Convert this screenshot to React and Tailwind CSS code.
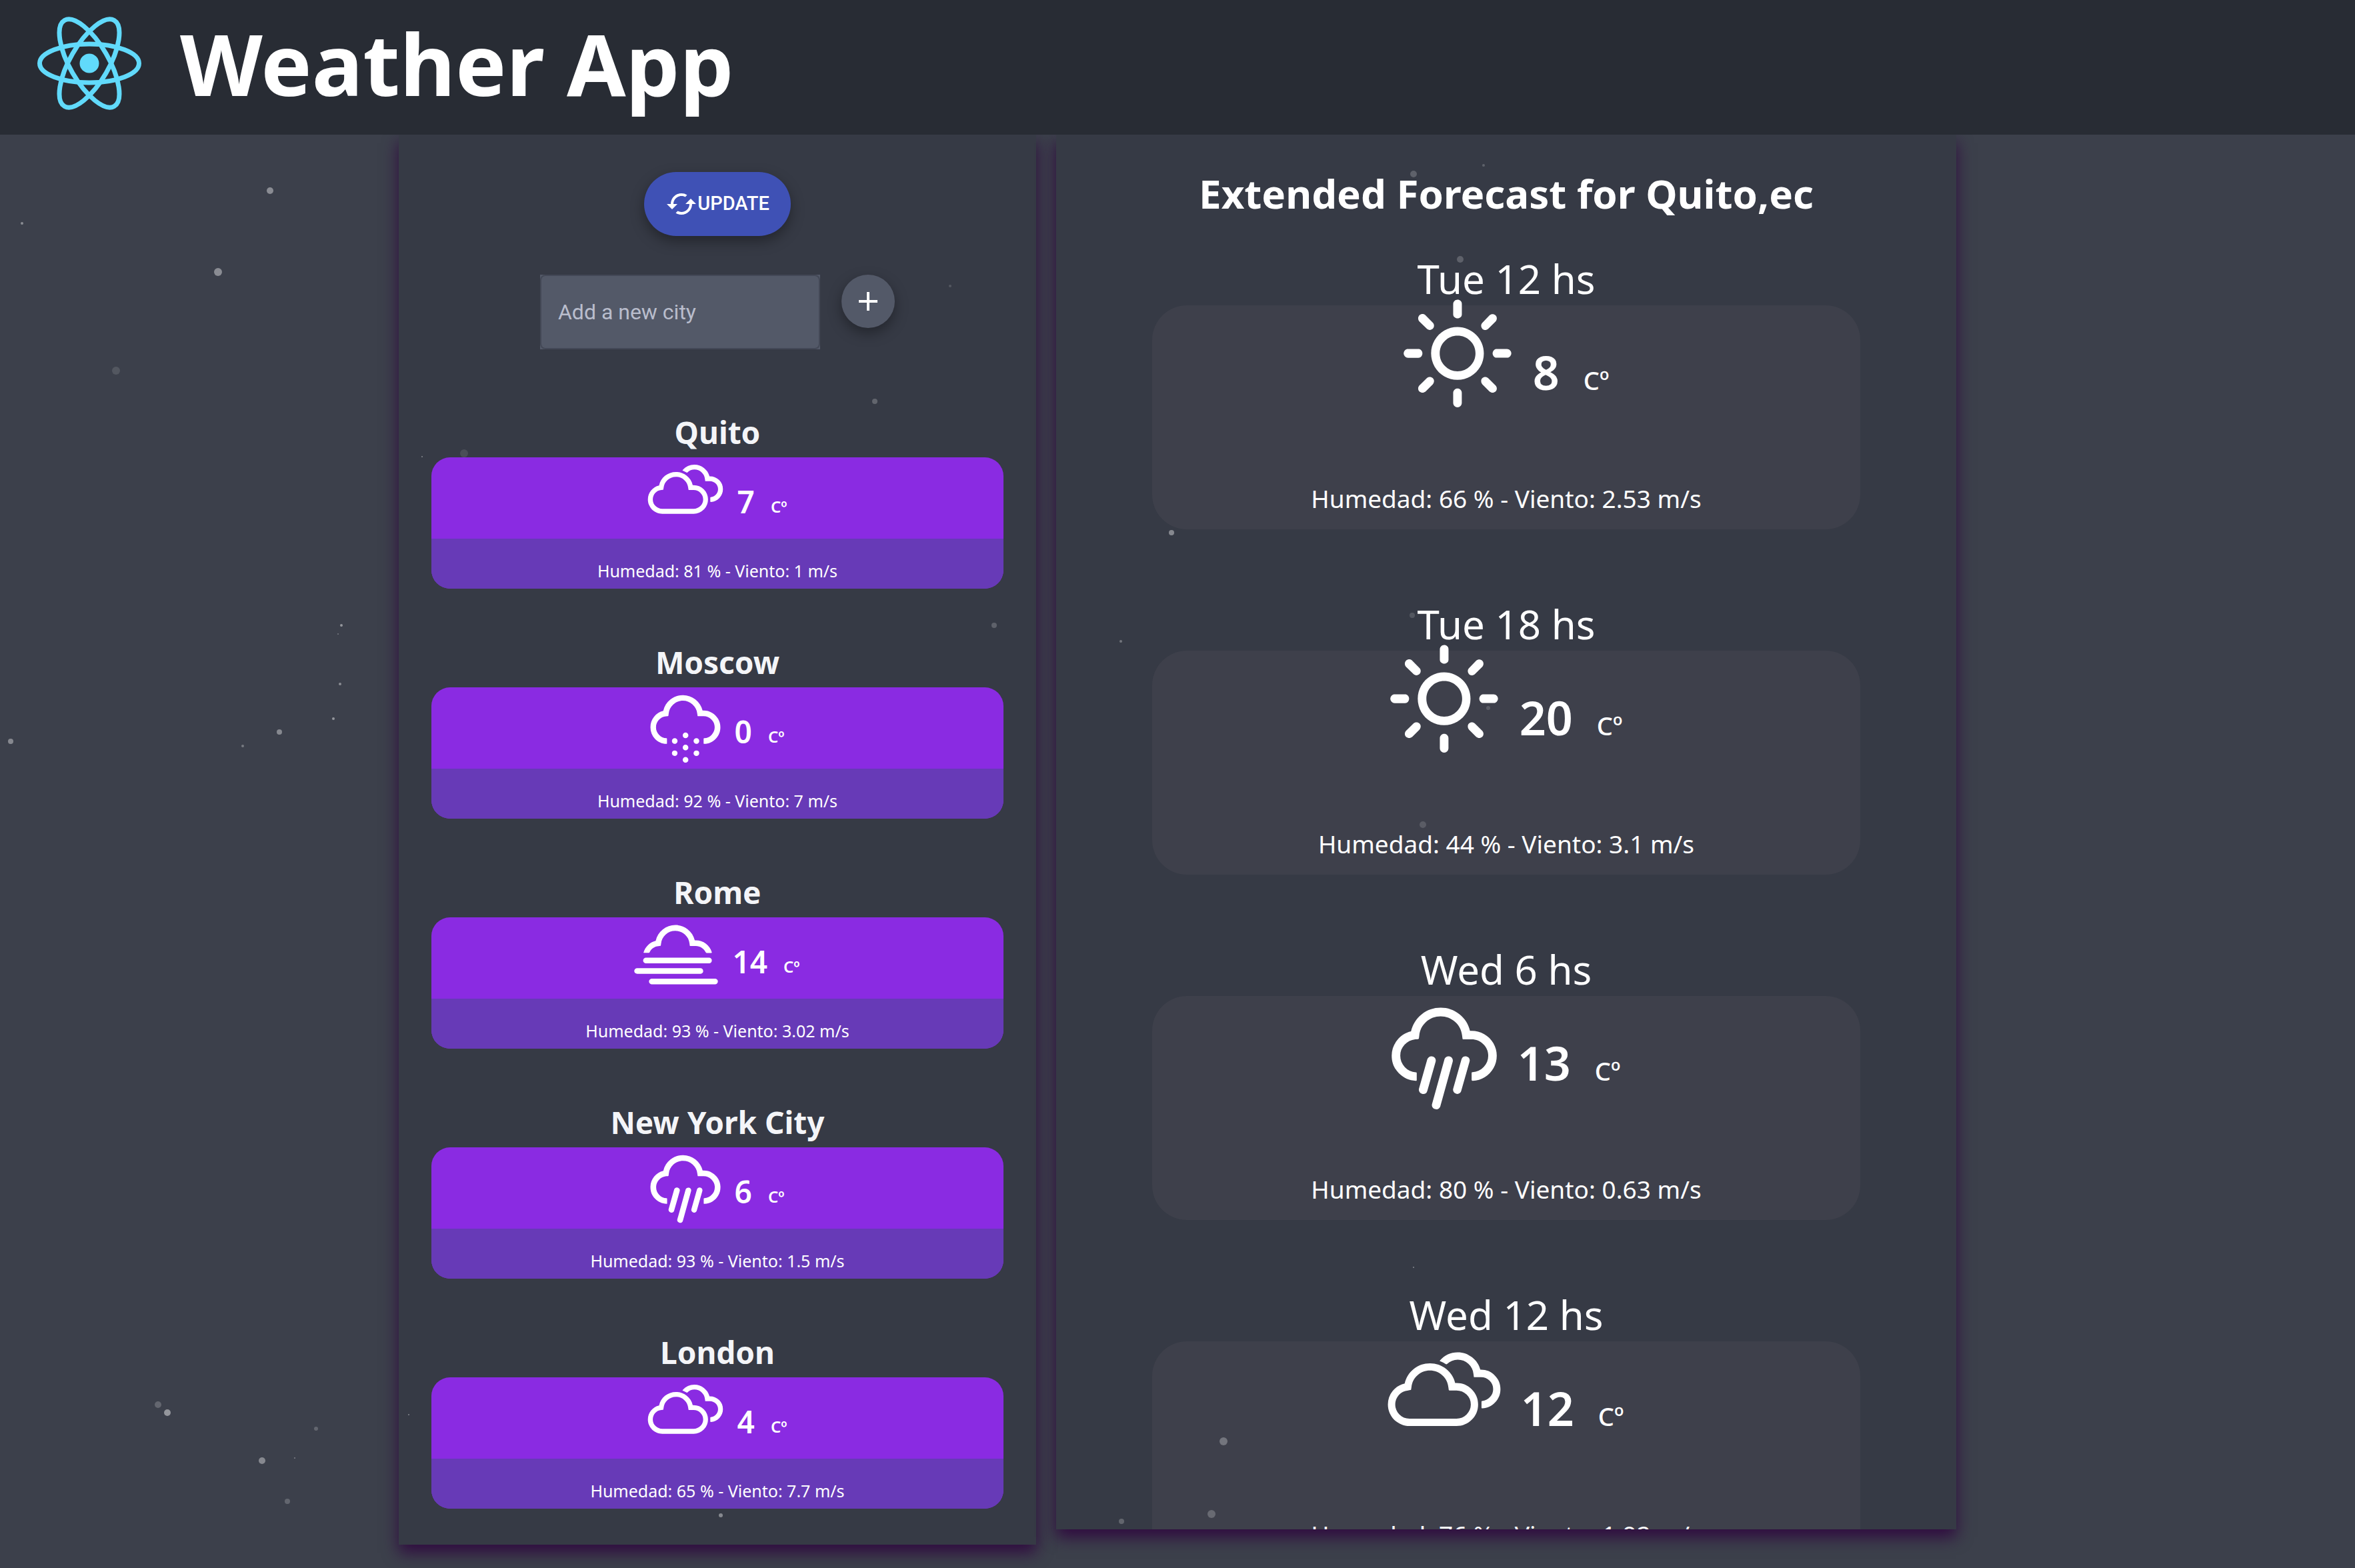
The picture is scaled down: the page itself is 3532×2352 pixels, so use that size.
import React from "react";
import { WiDaySunny, WiCloudy, WiSnow, WiFog, WiRain } from "react-icons/wi";
import { MdCached, MdAdd } from "react-icons/md";

// Negative side margins take up the empty space inside each icon's square box.
const sunny = { Icon: WiDaySunny, small: "-mx-[22px]", large: "-mx-[33px]" };
const cloudy = { Icon: WiCloudy, small: "-mx-[20px]", large: "-mx-[31px]" };
const snow = { Icon: WiSnow, small: "-mx-[24px]", large: "-mx-[36px]" };
const fog = { Icon: WiFog, small: "-mx-[14px]", large: "-mx-[22px]" };
const rain = { Icon: WiRain, small: "-mx-[24px]", large: "-mx-[36px]" };

const cities = [
  { name: "Quito", icon: cloudy, temp: 7, hum: 81, wind: "1" },
  { name: "Moscow", icon: snow, temp: 0, hum: 92, wind: "7" },
  { name: "Rome", icon: fog, temp: 14, hum: 93, wind: "3.02" },
  { name: "New York City", icon: rain, temp: 6, hum: 93, wind: "1.5" },
  { name: "London", icon: cloudy, temp: 4, hum: 65, wind: "7.7" },
];

const forecast = [
  { when: "Tue 12 hs", icon: sunny, temp: 8, hum: 66, wind: "2.53" },
  { when: "Tue 18 hs", icon: sunny, temp: 20, hum: 44, wind: "3.1" },
  { when: "Wed 6 hs", icon: rain, temp: 13, hum: 80, wind: "0.63" },
  { when: "Wed 12 hs", icon: cloudy, temp: 12, hum: 76, wind: "1.92" },
];

// [x, y, radius, opacity]
const particles = [
  [33, 335, 2, 0.4], [405, 286, 5, 0.4], [327, 408, 6, 0.4], [174, 556, 6, 0.12],
  [512, 938, 2, 0.45], [507, 951, 1, 0.3], [510, 1026, 2, 0.4], [500, 1078, 2, 0.45],
  [419, 1098, 4, 0.38], [364, 1119, 2, 0.3], [16, 1112, 4, 0.38], [237, 2107, 5, 0.2],
  [251, 2119, 5, 0.45], [393, 2191, 5, 0.38], [431, 2252, 4, 0.2], [474, 2143, 3, 0.2],
  [442, 2187, 1, 0.35], [1425, 429, 2, 0.15], [1312, 602, 4, 0.22], [696, 680, 6, 0.1],
  [1491, 938, 4, 0.2], [1081, 2273, 3, 0.4], [2120, 261, 5, 0.2], [2225, 248, 2, 0.2],
  [2190, 389, 5, 0.2], [1757, 799, 4, 0.4], [1681, 962, 2, 0.3], [2134, 1237, 5, 0.15],
  [2118, 923, 4, 0.15], [1835, 2162, 6, 0.28], [1817, 2271, 6, 0.22], [1682, 2282, 4, 0.22],
  [2232, 1062, 3, 0.15], [2120, 1901, 1, 0.4], [613, 2122, 1, 0.4], [633, 685, 1, 0.4],
];

function Particles() {
  return (
    <svg className="pointer-events-none absolute inset-0 size-full" aria-hidden="true">
      {particles.map(([x, y, r, o], i) => (
        <circle key={i} cx={x} cy={y} r={r} fill="#fff" fillOpacity={o} />
      ))}
    </svg>
  );
}

function Logo() {
  return (
    <svg viewBox="-78 -70 156 140" className="h-[140px] w-[156px]" fill="none" stroke="#61dafb" strokeWidth="7" aria-hidden="true">
      <ellipse rx="74.5" ry="29" />
      <ellipse rx="74.5" ry="29" transform="rotate(60)" />
      <ellipse rx="74.5" ry="29" transform="rotate(120)" />
      <circle r="14.5" fill="#61dafb" stroke="none" />
    </svg>
  );
}

function CityCard({ name, icon, temp, hum, wind }) {
  return (
    <li className="flex flex-col">
      <h2 className="text-center text-[46px] leading-[76px] font-bold text-[#f4f5f8]">{name}</h2>
      <div className="flex h-[197px] flex-col overflow-hidden rounded-[28px] bg-[#8a2be2]">
        <div className="flex h-[122px] items-start justify-center">
          <icon.Icon className={`-mt-[26px] size-[152px] shrink-0 ${icon.small}`} />
          <p className="mt-[36px] ml-[22px] text-[46px] leading-[60px] font-semibold">{temp}</p>
          <p className="mt-[52px] ml-6 text-[24px] leading-[44px] font-semibold">Cº</p>
        </div>
        <p className="flex-1 bg-[#673ab7] pt-[32px] text-center text-[25px] leading-[32px]">
          Humedad: {hum} % - Viento: {wind} m/s
        </p>
      </div>
    </li>
  );
}

function ForecastCard({ when, icon, temp, hum, wind }) {
  return (
    <li className="flex flex-col">
      <h3 className="mb-1 text-center text-[60px] leading-[72px]">{when}</h3>
      <div className="flex h-[336px] flex-col rounded-[52px] bg-[#3e404b]">
        <div className="flex h-[264px] items-start justify-center">
          <icon.Icon className={`-mt-[39px] size-[228px] shrink-0 ${icon.large}`} />
          <p className="mt-[54px] ml-[32px] text-[70px] leading-[92px] font-semibold">{temp}</p>
          <p className="mt-[84px] ml-9 text-[38px] leading-[56px] font-medium">Cº</p>
        </div>
        <p className="text-center text-[37px] leading-[52px]">
          Humedad: {hum} % - Viento: {wind} m/s
        </p>
      </div>
    </li>
  );
}

export default function App() {
  return (
    <div className="relative flex h-screen flex-col overflow-hidden bg-[#3c404b] font-['Noto_Sans','Open_Sans',sans-serif] text-white">
      <header className="relative z-10 flex h-[202px] shrink-0 items-center gap-[58px] bg-[#282c34] pb-[12px] pl-[56px]">
        <Logo />
        <h1 className="text-[128px] leading-[180px] font-bold">Weather App</h1>
      </header>
      <main className="mx-auto grid w-[66.14%] grid-cols-[956fr_1350fr] items-start gap-[30px]">
        <section className="flex flex-col items-center bg-[#363a45] px-[49px] pt-[56px] pb-[54px] shadow-[0_12px_22px_#300b40]">
          <button className="flex h-[96px] items-center rounded-[48px] bg-[#3f51b5] px-[32px] font-['Roboto',sans-serif] text-[29px] font-medium shadow-[0_8px_20px_rgba(0,0,0,0.35)]">
            <MdCached className="size-[48px]" />
            UPDATE
          </button>
          <form className="mt-[58px] flex items-start gap-[32px]">
            <div className="bg-[#535968]">
              <input aria-label="Add a new city" placeholder="Add a new city" className="block h-[112px] w-[420px] rounded-[8px] border-2 border-[#434856] bg-transparent px-[25px] font-['Roboto',sans-serif] text-[32px] placeholder:text-[#b9bdcc]" />
            </div>
            <button type="button" aria-label="Add city" className="flex size-[80px] items-center justify-center rounded-full bg-[#535968] shadow-[0_8px_20px_rgba(0,0,0,0.35)]">
              <MdAdd className="size-[48px]" />
            </button>
          </form>
          <ul className="mt-[86px] flex w-full flex-col gap-[72px]">
            {cities.map((c) => <CityCard key={c.name} {...c} />)}
          </ul>
        </section>
        <section className="flex h-[calc(100vh-260px)] flex-col overflow-y-auto bg-[#363a45] px-[144px] pt-[42px] shadow-[0_12px_22px_#300b40] [scrollbar-width:none]">
          <h2 className="shrink-0 text-center text-[60px] leading-[92px] font-bold">Extended Forecast for Quito,ec</h2>
          <ul className="mt-[46px] flex flex-col gap-[106px]">
            {forecast.map((f) => <ForecastCard key={f.when} {...f} />)}
          </ul>
        </section>
      </main>
      <Particles />
    </div>
  );
}
